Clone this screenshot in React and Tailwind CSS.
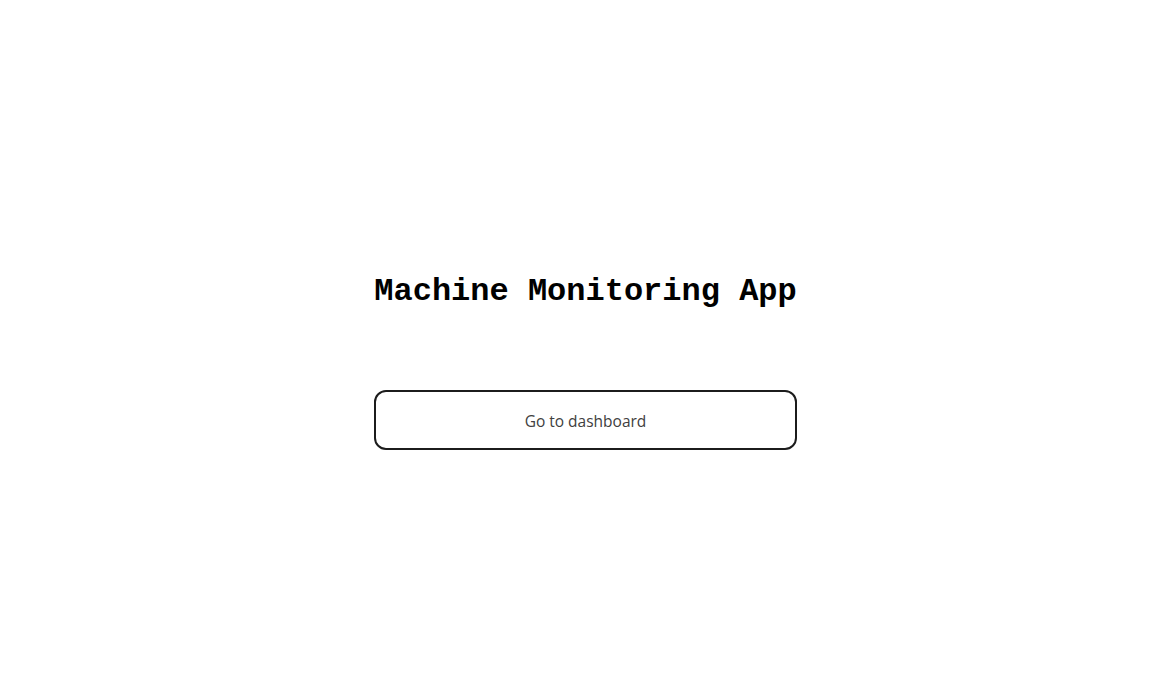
import React from 'react';

function App() {
  return (
    <div className="w-full h-screen bg-white flex flex-col items-center justify-center pt-[36px]">
      <h1 className="text-[32px] leading-[37px] font-bold text-black font-['Courier_New','Liberation_Mono',monospace]">
        Machine Monitoring App
      </h1>

      <button className="mt-[80px] w-[423px] h-[60px] pt-[4px] border-2 border-[#1c1c1c] rounded-[12px] bg-white text-[15.5px] text-[#404040] font-['Open_Sans','Noto_Sans',sans-serif]">
        Go to dashboard
      </button>
    </div>
  );
}

export default App;
